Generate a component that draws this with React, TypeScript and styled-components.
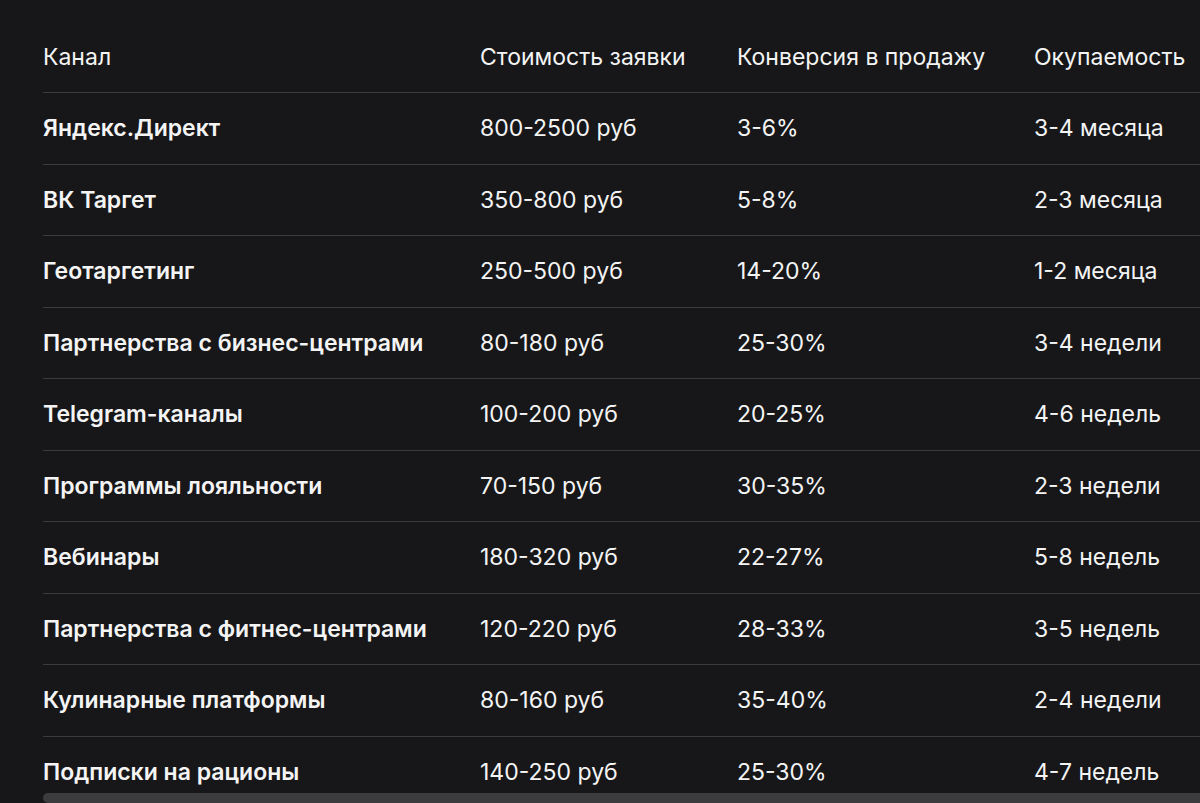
import React from "react";
import styled, { createGlobalStyle } from "styled-components";

const GlobalStyle = createGlobalStyle`
  html, body {
    margin: 0;
    padding: 0;
    background: #171719;
    overflow: hidden;
  }
  body {
    font-family: Inter, "Noto Sans", "Liberation Sans", sans-serif;
    color: #f4f4f4;
    -webkit-font-smoothing: antialiased;
  }
`;

type Row = {
  channel: string;
  cost: string;
  conversion: string;
  payback: string;
};

const rows: Row[] = [
  { channel: "Яндекс.Директ", cost: "800-2500 руб", conversion: "3-6%", payback: "3-4 месяца" },
  { channel: "ВК Таргет", cost: "350-800 руб", conversion: "5-8%", payback: "2-3 месяца" },
  { channel: "Геотаргетинг", cost: "250-500 руб", conversion: "14-20%", payback: "1-2 месяца" },
  { channel: "Партнерства с бизнес-центрами", cost: "80-180 руб", conversion: "25-30%", payback: "3-4 недели" },
  { channel: "Telegram-каналы", cost: "100-200 руб", conversion: "20-25%", payback: "4-6 недель" },
  { channel: "Программы лояльности", cost: "70-150 руб", conversion: "30-35%", payback: "2-3 недели" },
  { channel: "Вебинары", cost: "180-320 руб", conversion: "22-27%", payback: "5-8 недель" },
  { channel: "Партнерства с фитнес-центрами", cost: "120-220 руб", conversion: "28-33%", payback: "3-5 недель" },
  { channel: "Кулинарные платформы", cost: "80-160 руб", conversion: "35-40%", payback: "2-4 недели" },
  { channel: "Подписки на рационы", cost: "140-250 руб", conversion: "25-30%", payback: "4-7 недель" },
];

const Page = styled.div`
  height: 803px;
  display: flex;
  flex-direction: column;
  padding-left: 43px;
  box-sizing: border-box;
  overflow: hidden;
`;

const TableWrap = styled.div`
  flex: 1;
  overflow: hidden;
`;

const Line = styled.div<{ $head?: boolean }>`
  display: grid;
  grid-template-columns: 437px 257px 297px 1fr;
  height: ${(p) => (p.$head ? "93px" : "71.5px")};
  align-items: ${(p) => (p.$head ? "start" : "center")};
  padding-top: ${(p) => (p.$head ? "43px" : "0")};
  box-sizing: border-box;
  border-bottom: 1px solid #3b3b3e;
  &:last-child {
    border-bottom: none;
  }
`;

const Cell = styled.div<{ $strong?: boolean }>`
  font-size: 23px;
  line-height: 28px;
  font-weight: ${(p) => (p.$strong ? 600 : 400)};
  white-space: nowrap;
`;

const Scrollbar = styled.div`
  height: 10px;
  background: #3c3c3e;
  border-top-left-radius: 5px;
  border-bottom-left-radius: 5px;
  flex-shrink: 0;
`;

export default function App() {
  return (
    <>
      <GlobalStyle />
      <Page>
        <TableWrap>
          <Line $head>
            <Cell>Канал</Cell>
            <Cell>Стоимость заявки</Cell>
            <Cell>Конверсия в продажу</Cell>
            <Cell>Окупаемость</Cell>
          </Line>
          {rows.map((r) => (
            <Line key={r.channel}>
              <Cell $strong>{r.channel}</Cell>
              <Cell>{r.cost}</Cell>
              <Cell>{r.conversion}</Cell>
              <Cell>{r.payback}</Cell>
            </Line>
          ))}
        </TableWrap>
        <Scrollbar />
      </Page>
    </>
  );
}
